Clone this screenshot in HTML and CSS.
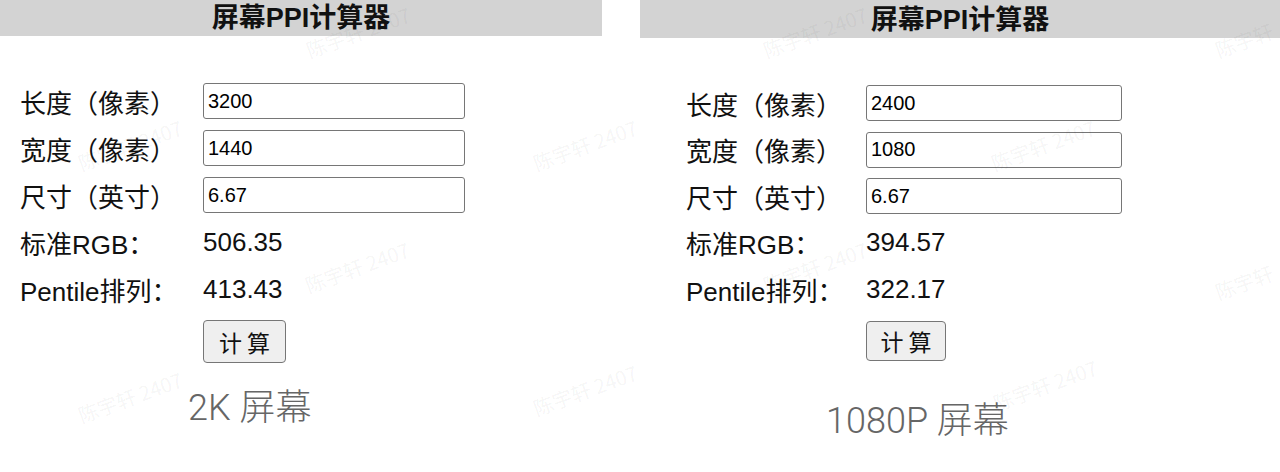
FILE: index.html
```html
<!DOCTYPE html>
<html lang="zh-CN">
<head>
<meta charset="utf-8">
<title>屏幕PPI计算器</title>
<link rel="stylesheet" href="styles.css">
</head>
<body>
<div class="page">
  <section class="panel panel-left">
    <h1 class="bar">屏幕PPI计算器</h1>
    <div class="form">
      <label class="lbl">长度（像素）</label><input class="field" value="3200">
      <label class="lbl">宽度（像素）</label><input class="field" value="1440">
      <label class="lbl">尺寸（英寸）</label><input class="field" value="6.67">
      <span class="lbl">标准RGB：</span><span class="val">506.35</span>
      <span class="lbl">Pentile排列：</span><span class="val">413.43</span>
      <span></span><div><button class="btn">计 算</button></div>
    </div>
    <p class="caption">2K 屏幕</p>
  </section>
  <section class="panel panel-right">
    <h1 class="bar">屏幕PPI计算器</h1>
    <div class="form">
      <label class="lbl">长度（像素）</label><input class="field" value="2400">
      <label class="lbl">宽度（像素）</label><input class="field" value="1080">
      <label class="lbl">尺寸（英寸）</label><input class="field" value="6.67">
      <span class="lbl">标准RGB：</span><span class="val">394.57</span>
      <span class="lbl">Pentile排列：</span><span class="val">322.17</span>
      <span></span><div><button class="btn">计 算</button></div>
    </div>
    <p class="caption">1080P 屏幕</p>
  </section>
  <div class="watermarks">
    <span class="wm" style="left:358px;top:32px">陈宇轩 2407</span>
    <span class="wm" style="left:815px;top:32px">陈宇轩 2407</span>
    <span class="wm" style="left:1244px;top:40px">陈宇轩</span>
    <span class="wm" style="left:130px;top:145px">陈宇轩 2407</span>
    <span class="wm" style="left:585px;top:145px">陈宇轩 2407</span>
    <span class="wm" style="left:1043px;top:145px">陈宇轩 2407</span>
    <span class="wm" style="left:357px;top:267px">陈宇轩 2407</span>
    <span class="wm" style="left:815px;top:267px">陈宇轩 2407</span>
    <span class="wm" style="left:1244px;top:282px">陈宇轩</span>
    <span class="wm" style="left:130px;top:397px">陈宇轩 2407</span>
    <span class="wm" style="left:585px;top:390px">陈宇轩 2407</span>
    <span class="wm" style="left:1045px;top:385px">陈宇轩 2407</span>
  </div>
</div>
</body>
</html>
```
FILE: styles.css
```css
* { box-sizing: border-box; }
html, body { margin: 0; padding: 0; background: #fff; }
body {
  font-family: "Liberation Sans", "Noto Sans CJK SC", sans-serif;
  color: #111;
}
.page {
  position: relative;
  display: flex;
  width: 1280px;
  height: 472px;
  overflow: hidden;
}
.panel { width: 640px; display: flex; flex-direction: column; }
.bar {
  margin: 0;
  background: #d3d3d3;
  text-align: center;
  font-size: 27px;
  font-weight: bold;
  color: #111;
  font-family: "Liberation Sans", "Noto Sans CJK SC", sans-serif;
}
.panel-left .bar { width: 602px; height: 36px; line-height: 36px; }
.panel-right .bar { width: 640px; height: 38px; line-height: 40px; }

.form {
  display: grid;
  align-items: center;
  font-size: 26px;
}
.panel-left .form {
  margin: 47px 0 0 20px;
  grid-template-columns: 183px 262px;
  grid-auto-rows: 36px;
  row-gap: 11px;
}
.panel-right .form {
  margin: 47px 0 0 46px;
  grid-template-columns: 180px 256px;
  grid-auto-rows: 36px;
  row-gap: 10.5px;
}
.lbl { white-space: nowrap; color: #111; }
.val { color: #111; }
.field {
  height: 36px;
  width: 100%;
  border: 1px solid #767676;
  border-radius: 3px;
  padding: 0 4px;
  font-family: "Liberation Sans", sans-serif;
  font-size: 20px;
  color: #000;
  background: #fff;
}
.btn {
  border: 1px solid #767676;
  border-radius: 4px;
  background: #efefef;
  font-family: "Noto Sans CJK SC", sans-serif;
  font-size: 23px;
  color: #111;
  padding: 0;
  display: block;
}
.panel-left .btn { width: 83px; height: 43px; margin-top: 11px; }
.panel-right .btn { width: 80px; height: 40px; margin-top: 11px; }

.caption {
  margin: 0;
  font-family: Roboto, "Noto Sans CJK SC", sans-serif;
  font-weight: 300;
  font-size: 36px;
  line-height: 48px;
  color: #666;
}
.panel-left .caption { margin: 30px 0 0 188px; }
.panel-right .caption { margin: 43px 0 0 186px; }

.watermarks { position: absolute; inset: 0; pointer-events: none; }
.wm {
  position: absolute;
  transform: translate(-50%, -50%) rotate(-20deg);
  white-space: nowrap;
  font-family: "Noto Sans CJK SC", sans-serif;
  font-size: 20px;
  color: rgba(0, 0, 0, 0.055);
}
```
